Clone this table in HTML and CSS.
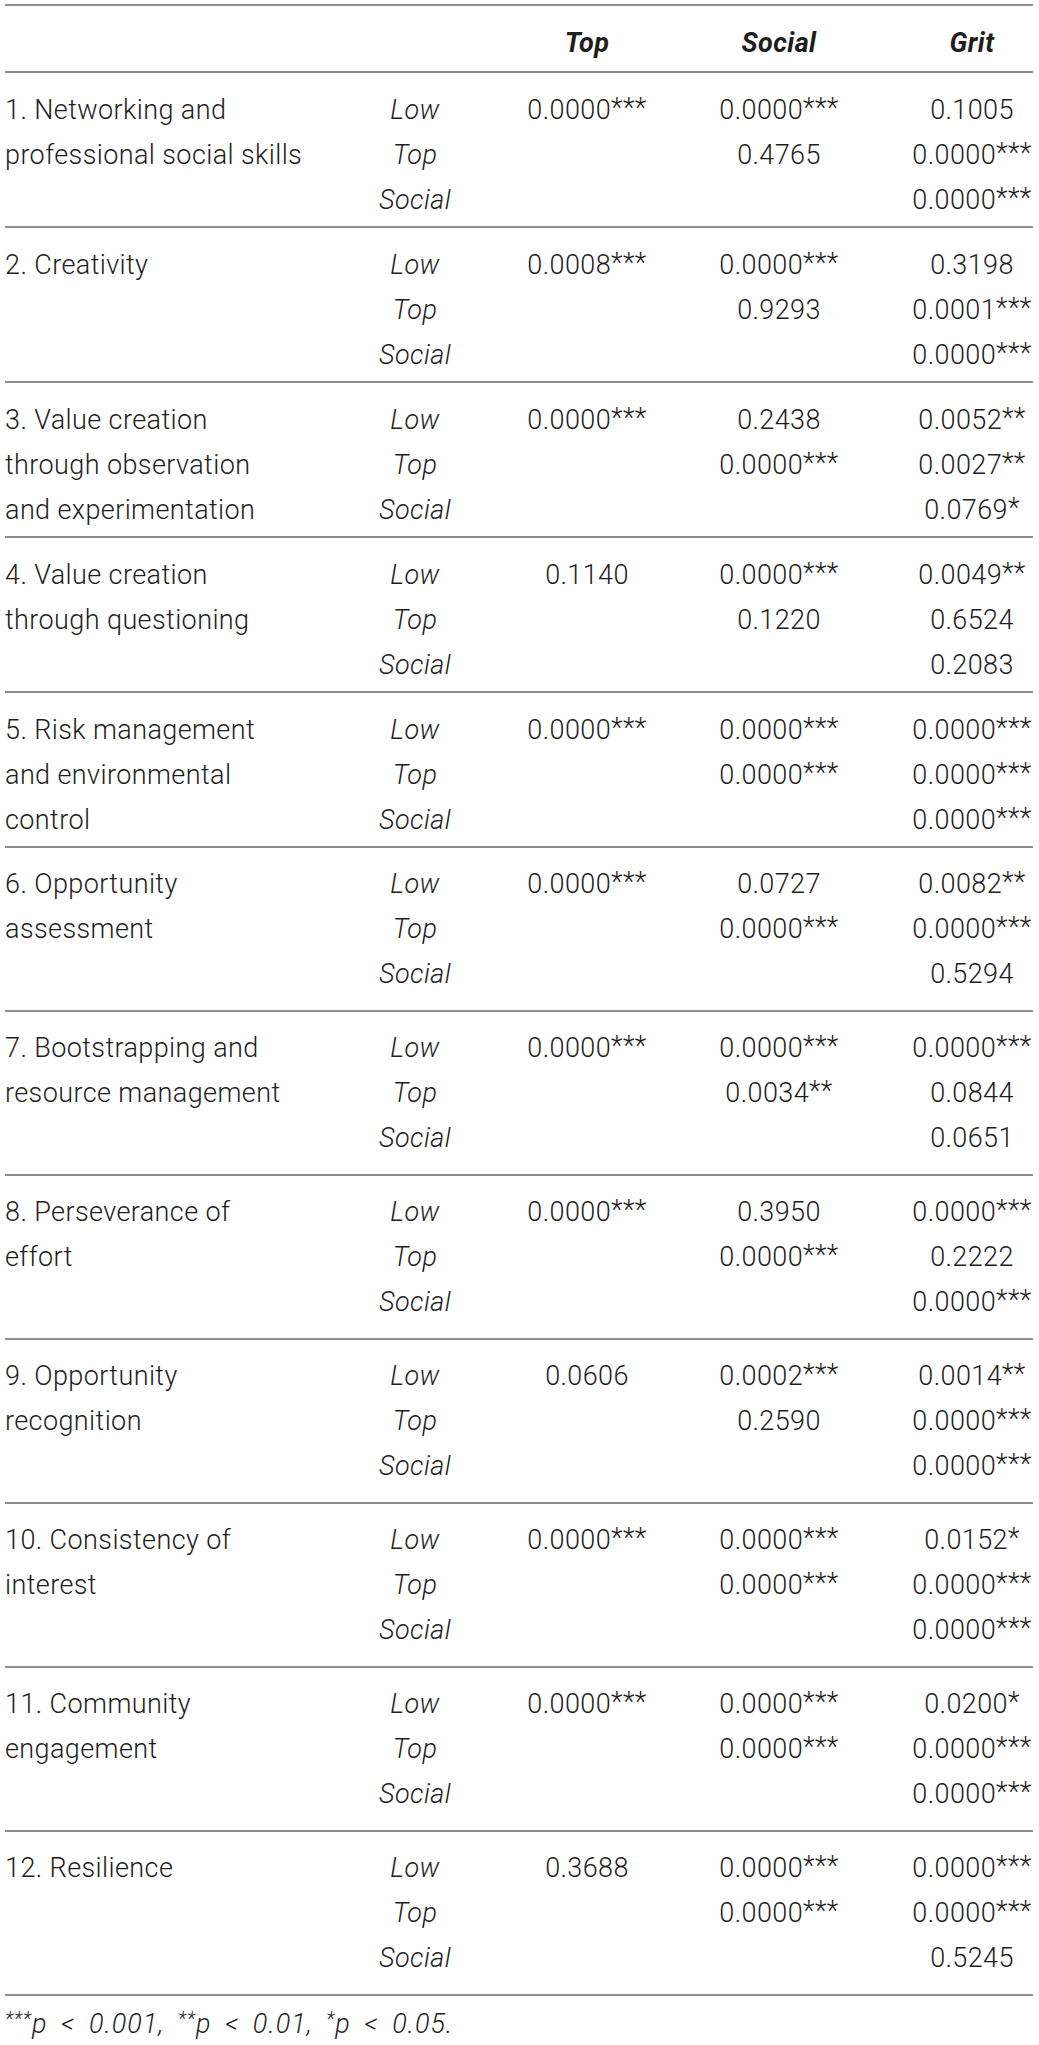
FILE: index.html
```html
<!DOCTYPE html>
<html lang="en">
<head>
    <meta charset="UTF-8">
    <title>Pairwise comparisons</title>
    <link rel="stylesheet" href="styles.css">
</head>
<body>
    <div class="table">
        <div class="head">
            <span></span><span></span><span>Top</span><span>Social</span><span>Grit</span>
        </div>

        <div class="row">
            <div class="name">1. Networking and<br>professional social skills</div>
            <span class="lab">Low</span><span>0.0000<sup>***</sup></span><span>0.0000<sup>***</sup></span><span>0.1005</span>
            <span class="lab">Top</span><span></span><span>0.4765</span><span>0.0000<sup>***</sup></span>
            <span class="lab">Social</span><span></span><span></span><span>0.0000<sup>***</sup></span>
        </div>

        <div class="row">
            <div class="name">2. Creativity</div>
            <span class="lab">Low</span><span>0.0008<sup>***</sup></span><span>0.0000<sup>***</sup></span><span>0.3198</span>
            <span class="lab">Top</span><span></span><span>0.9293</span><span>0.0001<sup>***</sup></span>
            <span class="lab">Social</span><span></span><span></span><span>0.0000<sup>***</sup></span>
        </div>

        <div class="row">
            <div class="name">3. Value creation<br>through observation<br>and experimentation</div>
            <span class="lab">Low</span><span>0.0000<sup>***</sup></span><span>0.2438</span><span>0.0052<sup>**</sup></span>
            <span class="lab">Top</span><span></span><span>0.0000<sup>***</sup></span><span>0.0027<sup>**</sup></span>
            <span class="lab">Social</span><span></span><span></span><span>0.0769<sup>*</sup></span>
        </div>

        <div class="row">
            <div class="name">4. Value creation<br>through questioning</div>
            <span class="lab">Low</span><span>0.1140</span><span>0.0000<sup>***</sup></span><span>0.0049<sup>**</sup></span>
            <span class="lab">Top</span><span></span><span>0.1220</span><span>0.6524</span>
            <span class="lab">Social</span><span></span><span></span><span>0.2083</span>
        </div>

        <div class="row">
            <div class="name">5. Risk management<br>and environmental<br>control</div>
            <span class="lab">Low</span><span>0.0000<sup>***</sup></span><span>0.0000<sup>***</sup></span><span>0.0000<sup>***</sup></span>
            <span class="lab">Top</span><span></span><span>0.0000<sup>***</sup></span><span>0.0000<sup>***</sup></span>
            <span class="lab">Social</span><span></span><span></span><span>0.0000<sup>***</sup></span>
        </div>

        <div class="row">
            <div class="name">6. Opportunity<br>assessment</div>
            <span class="lab">Low</span><span>0.0000<sup>***</sup></span><span>0.0727</span><span>0.0082<sup>**</sup></span>
            <span class="lab">Top</span><span></span><span>0.0000<sup>***</sup></span><span>0.0000<sup>***</sup></span>
            <span class="lab">Social</span><span></span><span></span><span>0.5294</span>
        </div>

        <div class="row">
            <div class="name">7. Bootstrapping and<br>resource management</div>
            <span class="lab">Low</span><span>0.0000<sup>***</sup></span><span>0.0000<sup>***</sup></span><span>0.0000<sup>***</sup></span>
            <span class="lab">Top</span><span></span><span>0.0034<sup>**</sup></span><span>0.0844</span>
            <span class="lab">Social</span><span></span><span></span><span>0.0651</span>
        </div>

        <div class="row">
            <div class="name">8. Perseverance of<br>effort</div>
            <span class="lab">Low</span><span>0.0000<sup>***</sup></span><span>0.3950</span><span>0.0000<sup>***</sup></span>
            <span class="lab">Top</span><span></span><span>0.0000<sup>***</sup></span><span>0.2222</span>
            <span class="lab">Social</span><span></span><span></span><span>0.0000<sup>***</sup></span>
        </div>

        <div class="row">
            <div class="name">9. Opportunity<br>recognition</div>
            <span class="lab">Low</span><span>0.0606</span><span>0.0002<sup>***</sup></span><span>0.0014<sup>**</sup></span>
            <span class="lab">Top</span><span></span><span>0.2590</span><span>0.0000<sup>***</sup></span>
            <span class="lab">Social</span><span></span><span></span><span>0.0000<sup>***</sup></span>
        </div>

        <div class="row">
            <div class="name">10. Consistency of<br>interest</div>
            <span class="lab">Low</span><span>0.0000<sup>***</sup></span><span>0.0000<sup>***</sup></span><span>0.0152<sup>*</sup></span>
            <span class="lab">Top</span><span></span><span>0.0000<sup>***</sup></span><span>0.0000<sup>***</sup></span>
            <span class="lab">Social</span><span></span><span></span><span>0.0000<sup>***</sup></span>
        </div>

        <div class="row">
            <div class="name">11. Community<br>engagement</div>
            <span class="lab">Low</span><span>0.0000<sup>***</sup></span><span>0.0000<sup>***</sup></span><span>0.0200<sup>*</sup></span>
            <span class="lab">Top</span><span></span><span>0.0000<sup>***</sup></span><span>0.0000<sup>***</sup></span>
            <span class="lab">Social</span><span></span><span></span><span>0.0000<sup>***</sup></span>
        </div>

        <div class="row">
            <div class="name">12. Resilience</div>
            <span class="lab">Low</span><span>0.3688</span><span>0.0000<sup>***</sup></span><span>0.0000<sup>***</sup></span>
            <span class="lab">Top</span><span></span><span>0.0000<sup>***</sup></span><span>0.0000<sup>***</sup></span>
            <span class="lab">Social</span><span></span><span></span><span>0.5245</span>
        </div>

        <p class="note"><sup>***</sup>p &lt; 0.001, <sup>**</sup>p &lt; 0.01, <sup>*</sup>p &lt; 0.05.</p>
    </div>
</body>
</html>
```

FILE: styles.css
```css
body {
    margin: 0;
    background: #fff;
    color: #1f1d1e;
    font-family: Roboto, "Liberation Sans", Arial, sans-serif;
    font-weight: 300;
    font-size: 27px;
    letter-spacing: 0.4px;
}
.table {
    width: 1028px;
    margin: 4px 0 0 5px;
}
.head,
.row {
    display: grid;
    grid-template-columns: 325px 170px 174px 210px 149px;
    line-height: 45px;
    text-align: center;
    white-space: nowrap;
}
/* last column sits a bit right of its track */
.head > :nth-child(4n+5),
.row > :nth-child(4n+5) {
    padding-left: 27px;
}
.head {
    border-top: 2px solid #8c8c8c;
    border-bottom: 2px solid #8c8c8c;
    padding: 15px 0 5px;
    font-weight: 700;
    font-style: italic;
}
.row {
    border-bottom: 2px solid #8c8c8c;
    padding: 15px 0 3px;
}
/* rows 6-12 are set a little looser */
.row:nth-child(n+7) {
    padding: 14px 0 13px;
}
.name {
    grid-row: span 3;
    text-align: left;
}
.lab {
    font-style: italic;
}
sup {
    font-size: 1em;
    line-height: 0;
    vertical-align: 2px;
}
.note {
    margin: 6px 0 0;
    line-height: 45px;
    font-style: italic;
    letter-spacing: 1px;
    word-spacing: 6px;
}
.note sup {
    font-size: 0.72em;
    vertical-align: 0.35em;
}
```
